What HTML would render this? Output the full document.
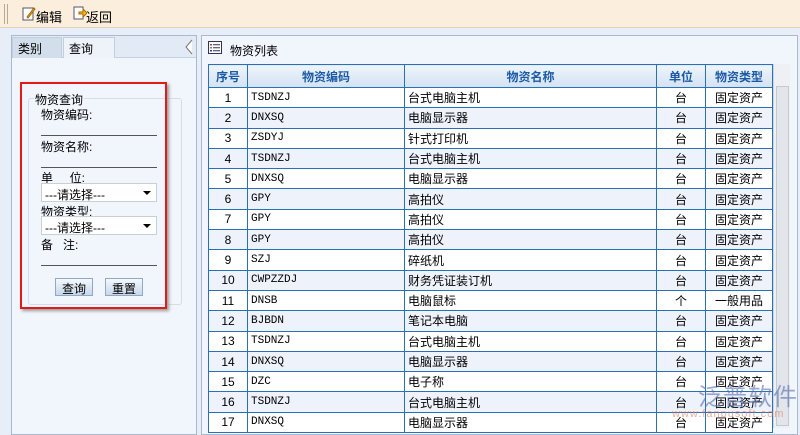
<!DOCTYPE html><html><head><meta charset="utf-8"><style>
*{margin:0;padding:0;box-sizing:border-box}
body{width:800px;height:428px;overflow:hidden;background:#e8eef7;font-family:"Liberation Sans","Noto Sans CJK SC",sans-serif;font-size:12px;color:#000;position:relative}
.tb{position:absolute;left:0;top:0;width:800px;height:28px;background:#fbeedd;border-bottom:1px solid #e0d2bc}
.tb .sep{position:absolute;left:4px;top:4px;width:4px;height:20px;border-left:1px solid #b9a98f;border-right:1px solid #b9a98f}
.tb span{position:absolute;top:7px;font-size:13px}
.lp{position:absolute;left:11px;top:35px;width:186px;height:400px;background:#f1f5fc;border:1px solid #a9b9cf}
.tabs{height:22px;background:#e2eaf5;border-bottom:1px solid #c5d2e4;position:relative}
.tab{position:absolute;top:1px;height:21px;padding:2px 5px;font-size:12px;border:1px solid #c2cfe0;border-bottom:none;background:#dce5f1}
.red{position:absolute;left:20px;top:82px;width:147px;height:227px;border:2px solid #e21a1a;box-shadow:2px 2px 3px #999}
.fs{position:absolute;left:28px;top:98px;width:154px;height:207px;border:1px solid #d5dde8;border-radius:3px}
.lbl{position:absolute;font-size:12px}
.line{position:absolute;width:116px;border-top:1px solid #555}
.sel{position:absolute;width:116px;height:19px;background:#fff;border:1px solid #c8cfd8;font-size:12px;padding:2px 3px}
.sel:after{content:"";position:absolute;right:5px;top:7px;border:4px solid transparent;border-top:4px solid #000}
.btn{position:absolute;top:278px;width:38px;height:18px;border:1px solid #8fa8c6;background:linear-gradient(#f4f8fd,#c7d7ea);text-align:center;font-size:12px;padding-top:1px}
.rp{position:absolute;left:201px;top:35px;width:597px;height:400px;background:#f1f5fc;border:1px solid #a9b9cf}
.ttl{position:absolute;left:230px;top:42px;font-size:12px}
table{position:absolute;left:208px;top:64px;border-collapse:collapse;table-layout:fixed;width:564px}
td,th{border:1px solid #2a70b5;height:20.3px;font-size:12px;white-space:nowrap;overflow:hidden}
th{height:23px;background:linear-gradient(#eef4fb,#d3e2f3);color:#1a5aa6;font-weight:bold}
td.c{text-align:center}
td.m{font-family:"Liberation Mono",monospace;font-size:11px;padding-left:3px}
td.n{padding-left:3px}
tr:nth-child(odd) td{background:#eef2fa}
tr:nth-child(even) td{background:#fff}
.sb{position:absolute;left:773px;top:64px;width:17px;height:364px;background:#eef0f3;border-left:1px solid #d0d5db}
.sb .th{position:absolute;left:2px;top:22px;width:13px;height:340px;background:#e2e5ea;border:1px solid #c5cad1}
.wm{position:absolute;left:698px;top:377px;color:#5a70b0;opacity:.6;font-size:24px;letter-spacing:1px;white-space:nowrap}
.wm2{position:absolute;left:672px;top:408px;color:#e07a5a;opacity:.6;font-size:11px;letter-spacing:1px;white-space:nowrap}
</style></head><body>
<div class="tb"><div class="sep"></div>
<svg style="position:absolute;left:22px;top:6px" width="14" height="16"><rect x="1" y="2" width="10" height="12" fill="#fff" stroke="#556"/><path d="M5 11 L12 2 L13 3 L6 12 Z" fill="#f0c020" stroke="#a60"/></svg>
<span style="left:36px">编辑</span>
<svg style="position:absolute;left:73px;top:5px" width="14" height="16"><rect x="1" y="2" width="9" height="12" fill="#fff" stroke="#556"/><path d="M6 7 H10 V4 L14 8 L10 12 V9 H6Z" fill="#f0c020" stroke="#a60"/></svg>
<span style="left:86px">返回</span></div>
<div class="lp"><div class="tabs">
<div class="tab" style="left:0;width:50px;background:#d3deeb">类别</div>
<div class="tab" style="left:51px;width:52px;background:#eef3fa">查询</div>
<svg style="position:absolute;left:172px;top:3px" width="10" height="16"><path d="M8 1 L2 8 L8 15" fill="#fff" stroke="#777"/></svg>
</div></div>
<div class="fs"></div>
<div class="red"></div>
<div class="lbl" style="left:34px;top:91px;background:#f1f5fc;padding:0 1px">物资查询</div>
<div class="lbl" style="left:41px;top:106px">物资编码:</div>
<div class="line" style="left:41px;top:135px"></div>
<div class="lbl" style="left:41px;top:138px">物资名称:</div>
<div class="line" style="left:41px;top:167px"></div>
<div class="lbl" style="left:41px;top:169px">单&nbsp;&nbsp;&nbsp;&nbsp;&nbsp;位:</div>
<div class="sel" style="left:41px;top:183px">---请选择---</div>
<div class="lbl" style="left:41px;top:203px">物资类型:</div>
<div class="sel" style="left:41px;top:216px">---请选择---</div>
<div class="lbl" style="left:41px;top:236px">备&nbsp;&nbsp;&nbsp;注:</div>
<div class="line" style="left:41px;top:265px"></div>
<div class="btn" style="left:55px">查询</div>
<div class="btn" style="left:105px">重置</div>
<div class="rp"></div>
<svg style="position:absolute;left:208px;top:41px" width="14" height="13"><rect x=".5" y=".5" width="13" height="12" fill="#fff" stroke="#335"/><rect x="2" y="3" width="2" height="1.5" fill="#c33"/><rect x="2" y="6" width="2" height="1.5" fill="#3a3"/><rect x="2" y="9" width="2" height="1.5" fill="#33c"/><path d="M5 3.7H12M5 6.7H12M5 9.7H12" stroke="#335"/></svg>
<div class="ttl">物资列表</div>
<table><colgroup><col style="width:39px"><col style="width:157px"><col style="width:252px"><col style="width:49px"><col style="width:67px"></colgroup>
<tr><th>序号</th><th>物资编码</th><th>物资名称</th><th>单位</th><th>物资类型</th></tr>
<tr><td class="c">1</td><td class="m">TSDNZJ</td><td class="n">台式电脑主机</td><td class="c">台</td><td class="c">固定资产</td></tr>
<tr><td class="c">2</td><td class="m">DNXSQ</td><td class="n">电脑显示器</td><td class="c">台</td><td class="c">固定资产</td></tr>
<tr><td class="c">3</td><td class="m">ZSDYJ</td><td class="n">针式打印机</td><td class="c">台</td><td class="c">固定资产</td></tr>
<tr><td class="c">4</td><td class="m">TSDNZJ</td><td class="n">台式电脑主机</td><td class="c">台</td><td class="c">固定资产</td></tr>
<tr><td class="c">5</td><td class="m">DNXSQ</td><td class="n">电脑显示器</td><td class="c">台</td><td class="c">固定资产</td></tr>
<tr><td class="c">6</td><td class="m">GPY</td><td class="n">高拍仪</td><td class="c">台</td><td class="c">固定资产</td></tr>
<tr><td class="c">7</td><td class="m">GPY</td><td class="n">高拍仪</td><td class="c">台</td><td class="c">固定资产</td></tr>
<tr><td class="c">8</td><td class="m">GPY</td><td class="n">高拍仪</td><td class="c">台</td><td class="c">固定资产</td></tr>
<tr><td class="c">9</td><td class="m">SZJ</td><td class="n">碎纸机</td><td class="c">台</td><td class="c">固定资产</td></tr>
<tr><td class="c">10</td><td class="m">CWPZZDJ</td><td class="n">财务凭证装订机</td><td class="c">台</td><td class="c">固定资产</td></tr>
<tr><td class="c">11</td><td class="m">DNSB</td><td class="n">电脑鼠标</td><td class="c">个</td><td class="c">一般用品</td></tr>
<tr><td class="c">12</td><td class="m">BJBDN</td><td class="n">笔记本电脑</td><td class="c">台</td><td class="c">固定资产</td></tr>
<tr><td class="c">13</td><td class="m">TSDNZJ</td><td class="n">台式电脑主机</td><td class="c">台</td><td class="c">固定资产</td></tr>
<tr><td class="c">14</td><td class="m">DNXSQ</td><td class="n">电脑显示器</td><td class="c">台</td><td class="c">固定资产</td></tr>
<tr><td class="c">15</td><td class="m">DZC</td><td class="n">电子称</td><td class="c">台</td><td class="c">固定资产</td></tr>
<tr><td class="c">16</td><td class="m">TSDNZJ</td><td class="n">台式电脑主机</td><td class="c">台</td><td class="c">固定资产</td></tr>
<tr><td class="c">17</td><td class="m">DNXSQ</td><td class="n">电脑显示器</td><td class="c">台</td><td class="c">固定资产</td></tr>
</table>
<div class="sb"><div class="th"></div></div>
<div class="wm">泛普软件</div>
<div class="wm2">www.fanpusoft.com</div>
</body></html>
